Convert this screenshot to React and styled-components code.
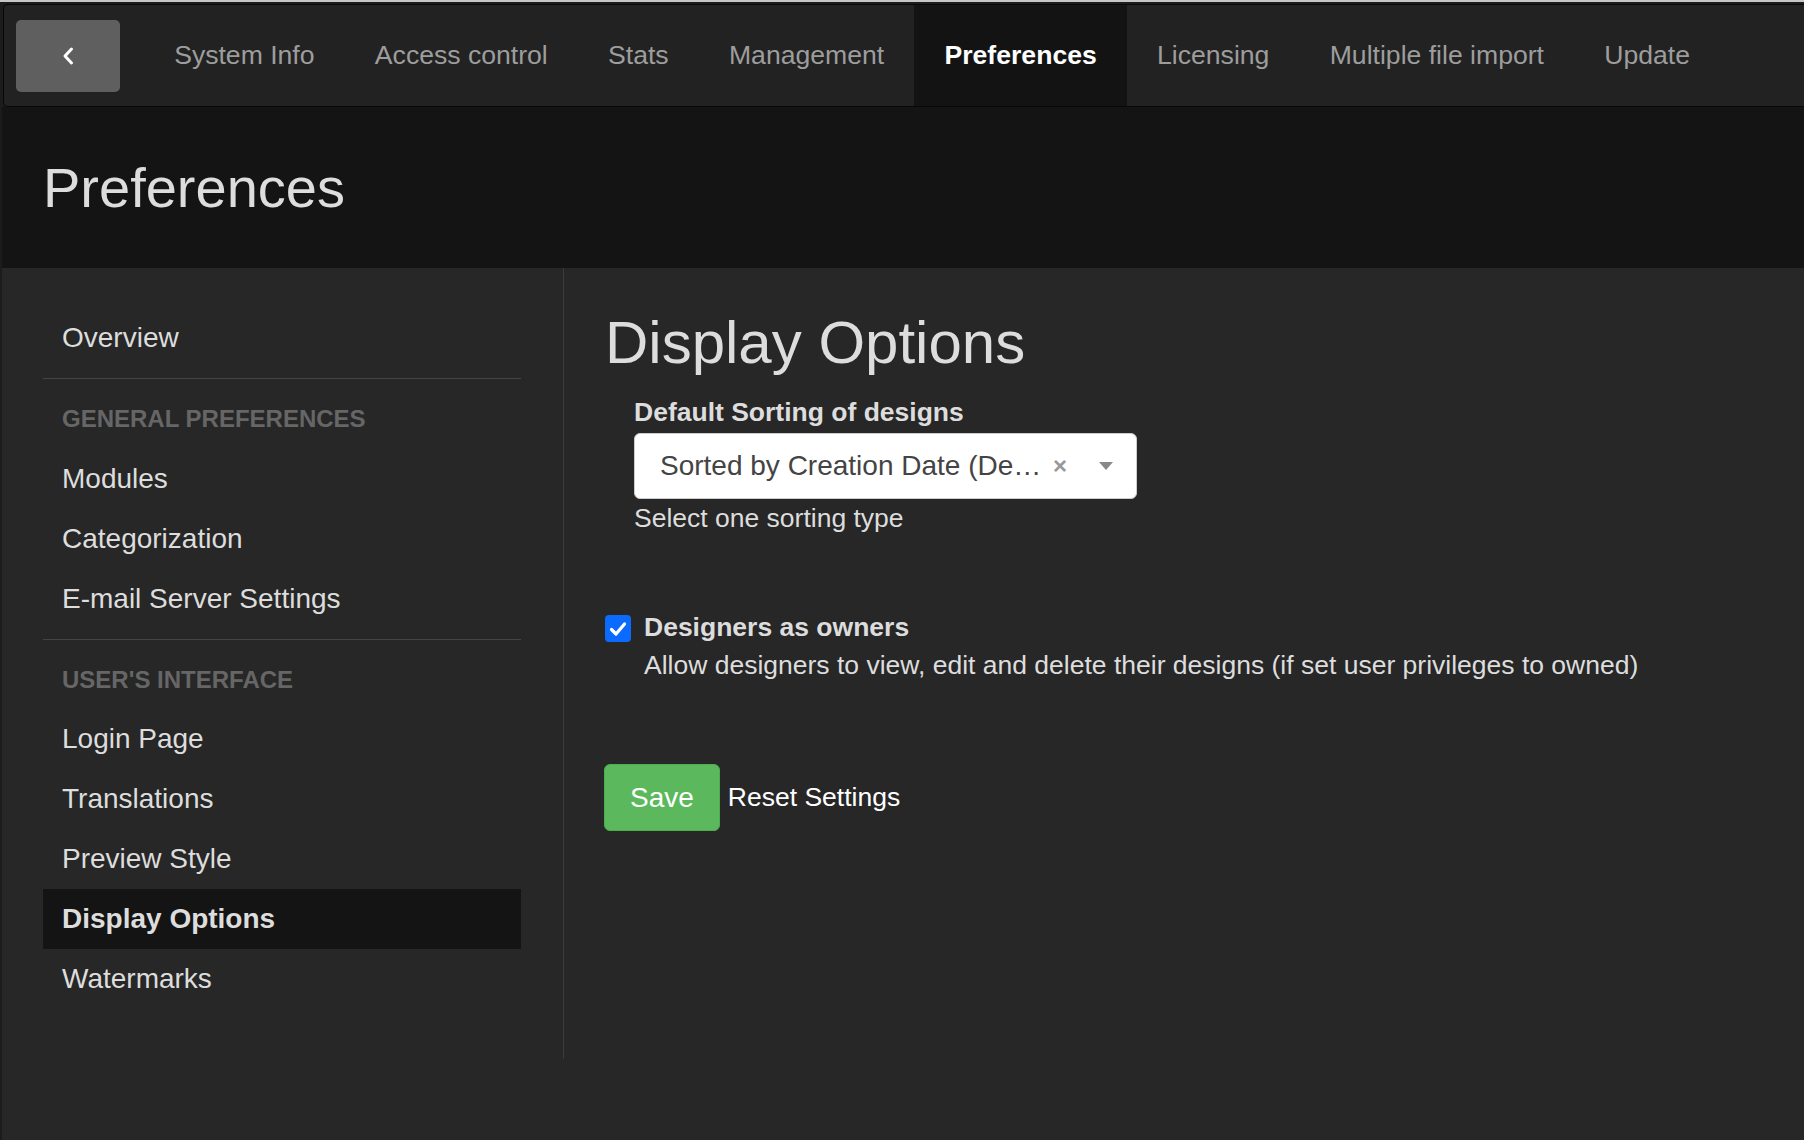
import React from 'react';
import styled, { createGlobalStyle } from 'styled-components';

const GlobalStyle = createGlobalStyle`
  html, body {
    margin: 0;
    padding: 0;
    background: #272727;
  }
  body {
    font-family: "Liberation Sans", Arial, Helvetica, sans-serif;
    color: #dddddd;
  }
  * {
    box-sizing: border-box;
  }
`;

const Page = styled.div`
  min-height: 1140px;
  border-left: 2px solid #1c1c1c;
  background: #272727;
`;

const TopStrip = styled.div`
  height: 2px;
  margin-left: -2px;
  background: #c6c6c6;
`;

const NavWrap = styled.div`
  background: #1c1c1c;
  padding: 2px 0 0 1px;
`;

const Navbar = styled.nav`
  display: flex;
  align-items: center;
  height: 103px;
  background: #222222;
  border: 1px solid #080808;
  border-right: none;
  border-radius: 5px 0 0 5px;
`;

const BackButton = styled.button`
  display: flex;
  align-items: center;
  justify-content: center;
  width: 104px;
  height: 72px;
  margin-left: 12px;
  margin-right: 24px;
  border: none;
  border-radius: 5px;
  background: #5f5f5f;
  cursor: pointer;
`;

const NavItem = styled.a`
  display: block;
  height: 101px;
  line-height: 101px;
  padding: 0 30.15px;
  font-size: 26.6px;
  font-weight: ${(p) => (p.$active ? 700 : 400)};
  color: ${(p) => (p.$active ? '#ffffff' : '#9d9d9d')};
  background: ${(p) => (p.$active ? '#131313' : 'transparent')};
  white-space: nowrap;
  cursor: pointer;
`;

const HeaderBand = styled.header`
  display: flex;
  align-items: center;
  height: 161px;
  padding-left: 41px;
  background: #141414;

  > h1 {
    margin: 0;
    font-size: 56px;
    font-weight: 400;
    color: #dddddd;
  }
`;

const Main = styled.div`
  display: flex;
  align-items: flex-start;
`;

const Sidebar = styled.aside`
  width: 562px;
  flex-shrink: 0;
  padding: 40px 42px 50px 41px;
  border-right: 1px solid #3b3b3b;
`;

const SideItem = styled.a`
  display: block;
  height: 60px;
  line-height: 60px;
  padding: 0 19px;
  font-size: 28px;
  font-weight: ${(p) => (p.$active ? 700 : 400)};
  color: #dddddd;
  background: ${(p) => (p.$active ? '#141414' : 'transparent')};
  cursor: pointer;
`;

const Divider = styled.hr`
  height: 1px;
  margin: 10px 0;
  border: none;
  background: #444444;
`;

const SideHeader = styled.div`
  height: 60px;
  line-height: 60px;
  padding: 0 19px;
  margin-bottom: ${(p) => (p.$tight ? '-1px' : '0')};
  font-size: 24px;
  font-weight: 700;
  color: #666666;
  text-transform: uppercase;
`;

const Content = styled.section`
  flex: 1;
  padding-left: 41px;

  > h2 {
    margin: 42px 0 0;
    font-size: 60px;
    line-height: 66px;
    font-weight: 400;
    color: #dddddd;
  }
`;

const FormGroup = styled.div`
  padding-left: 29px;
  margin-top: 18px;
`;

const Label = styled.label`
  display: block;
  font-size: 26.5px;
  line-height: 37px;
  font-weight: 700;
  color: #dddddd;
`;

const Select = styled.div`
  display: flex;
  align-items: center;
  width: 503px;
  height: 66px;
  margin-top: 2px;
  padding: 0 23px 0 25px;
  background: #ffffff;
  border: 1px solid #cccccc;
  border-radius: 6px;
`;

const SelectValue = styled.span`
  width: 386px;
  font-size: 28px;
  color: #444444;
  white-space: nowrap;
  overflow: hidden;
  text-overflow: ellipsis;
`;

const Clear = styled.span`
  margin-left: 7px;
  font-size: 24px;
  font-weight: 700;
  color: #999999;
`;

const Caret = styled.span`
  margin-left: auto;
  width: 0;
  height: 0;
  border-top: 8px solid #888888;
  border-left: 7.5px solid transparent;
  border-right: 7.5px solid transparent;
`;

const HelpText = styled.div`
  margin-top: 1px;
  font-size: 26.5px;
  line-height: 37px;
  color: #dddddd;
`;

const CheckRow = styled.div`
  display: flex;
  align-items: flex-start;
  gap: 13px;
  margin-top: 72px;
`;

const CheckBox = styled.span`
  display: flex;
  align-items: center;
  justify-content: center;
  width: 26px;
  height: 27px;
  margin-top: 6px;
  flex-shrink: 0;
  border-radius: 4px;
  background: #0b6bff;
`;

const CheckText = styled.div`
  font-size: 26.5px;
  line-height: 38px;
  color: #dddddd;

  > strong {
    display: block;
    line-height: 37px;
    font-weight: 700;
  }
`;

const Actions = styled.div`
  display: flex;
  align-items: center;
  gap: 8px;
  margin-top: 80px;
  margin-left: -1px;
`;

const SaveButton = styled.button`
  height: 67px;
  padding: 0 25px;
  font-family: inherit;
  font-size: 28px;
  line-height: 39px;
  color: #ffffff;
  background: #5cb85c;
  border: 1px solid #4cae4c;
  border-radius: 6px;
  cursor: pointer;
`;

const ResetLink = styled.a`
  font-size: 26.5px;
  color: #ffffff;
  cursor: pointer;
`;

const tabs = [
  'System Info',
  'Access control',
  'Stats',
  'Management',
  'Preferences',
  'Licensing',
  'Multiple file import',
  'Update',
];

const ChevronLeft = () => (
  <svg width="14" height="20" viewBox="0 0 14 20" fill="none">
    <polyline
      points="10.5,3 4,10 10.5,17"
      stroke="#ffffff"
      strokeWidth="3"
      strokeLinecap="round"
      strokeLinejoin="round"
    />
  </svg>
);

const Check = () => (
  <svg width="18" height="16" viewBox="0 0 18 16" fill="none">
    <polyline
      points="2.5,8.5 7,13 15.5,3"
      stroke="#ffffff"
      strokeWidth="3.2"
      strokeLinecap="round"
      strokeLinejoin="round"
    />
  </svg>
);

const App = () => {
  return (
    <Page>
      <GlobalStyle />
      <TopStrip />
      <NavWrap>
        <Navbar>
          <BackButton aria-label="Back">
            <ChevronLeft />
          </BackButton>
          {tabs.map((t) => (
            <NavItem key={t} $active={t === 'Preferences'}>
              {t}
            </NavItem>
          ))}
        </Navbar>
      </NavWrap>

      <HeaderBand>
        <h1>Preferences</h1>
      </HeaderBand>

      <Main>
        <Sidebar>
          <SideItem>Overview</SideItem>
          <Divider />
          <SideHeader>General Preferences</SideHeader>
          <SideItem>Modules</SideItem>
          <SideItem>Categorization</SideItem>
          <SideItem>E-mail Server Settings</SideItem>
          <Divider />
          <SideHeader $tight>User's Interface</SideHeader>
          <SideItem>Login Page</SideItem>
          <SideItem>Translations</SideItem>
          <SideItem>Preview Style</SideItem>
          <SideItem $active>Display Options</SideItem>
          <SideItem>Watermarks</SideItem>
        </Sidebar>

        <Content>
          <h2>Display Options</h2>
          <FormGroup>
            <Label>Default Sorting of designs</Label>
            <Select>
              <SelectValue>Sorted by Creation Date (Descending)</SelectValue>
              <Clear>×</Clear>
              <Caret />
            </Select>
            <HelpText>Select one sorting type</HelpText>
          </FormGroup>

          <CheckRow>
            <CheckBox>
              <Check />
            </CheckBox>
            <CheckText>
              <strong>Designers as owners</strong>
              Allow designers to view, edit and delete their designs (if set user privileges to owned)
            </CheckText>
          </CheckRow>

          <Actions>
            <SaveButton>Save</SaveButton>
            <ResetLink>Reset Settings</ResetLink>
          </Actions>
        </Content>
      </Main>
    </Page>
  );
};

export default App;
